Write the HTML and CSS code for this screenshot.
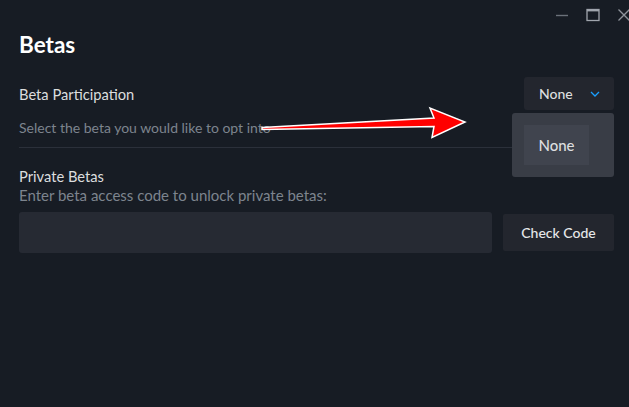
FILE: index.html
```html
<!DOCTYPE html>
<html lang="en">
<head>
<meta charset="utf-8">
<title>Betas</title>
<link rel="stylesheet" href="styles.css">
</head>
<body>
<div class="window">
  <div class="titlebar">
    <div class="ctrl"><svg width="14" height="14" viewBox="0 0 14 14"><path d="M1 7.5H13" stroke="#6b717a" stroke-width="1.4"/></svg></div>
    <div class="ctrl"><svg width="14" height="14" viewBox="0 0 14 14"><rect x="1" y="1.5" width="12" height="11" fill="none" stroke="#a0a5ad" stroke-width="1.3"/><path d="M1 2.6H13" stroke="#a0a5ad" stroke-width="1.6"/></svg></div>
    <div class="ctrl"><svg width="14" height="14" viewBox="0 0 14 14"><path d="M1.5 1.5L12.5 12.5M12.5 1.5L1.5 12.5" stroke="#8e939b" stroke-width="1.3"/></svg></div>
  </div>
  <div class="page">
    <h1 class="title">Betas</h1>
    <div class="row">
      <div class="label">Beta Participation</div>
      <button class="select">None<svg class="chev" width="10" height="6" viewBox="0 0 10 6"><path d="M1 1L5 5L9 1" fill="none" stroke="#1a9fff" stroke-width="1.3"/></svg></button>
    </div>
    <div class="desc first">Select the beta you would like to opt into</div>
    <div class="sep"></div>
    <div class="label private">Private Betas</div>
    <div class="desc second">Enter beta access code to unlock private betas:</div>
    <div class="coderow">
      <div class="input"></div>
      <button class="btn">Check Code</button>
    </div>
  </div>
  <div class="menu">
    <div class="item">None</div>
  </div>
  <svg class="arrow" width="629" height="407" viewBox="0 0 629 407">
    <path d="M262 127.6 L434 118 L430 108 L465 122 L432 137.5 L434 126.5 L262 129.6 Z" fill="#ff0000" stroke="#ffffff" stroke-width="1.5" stroke-linejoin="miter"/>
  </svg>
</div>
</body>
</html>
```
FILE: styles.css
```css
* { box-sizing: border-box; }
html, body {
  margin: 0;
  padding: 0;
  background: #171c24;
  overflow: hidden;
}
body {
  font-family: Lato, "Noto Sans", sans-serif;
  color: #dcdedf;
  width: 629px;
  height: 407px;
}
.window {
  position: relative;
  width: 629px;
  height: 407px;
  overflow: hidden;
}
.titlebar {
  height: 30px;
  display: flex;
  justify-content: flex-end;
  margin-right: -10px;
}
.ctrl {
  width: 31px;
  height: 30px;
  display: flex;
  align-items: center;
  justify-content: center;
  padding-bottom: 1px;
}
.page {
  padding: 0 15px 0 19px;
}
.title {
  margin: 0;
  font-size: 22.5px;
  font-weight: 700;
  line-height: 30px;
  color: #ffffff;
}
.row {
  margin-top: 17px;
  display: flex;
  justify-content: space-between;
  align-items: center;
}
.label {
  font-size: 14.7px;
  line-height: 18px;
  color: #dcdedf;
}
.select {
  width: 90px;
  height: 33px;
  border: none;
  border-radius: 3px;
  background: #23262e;
  color: #dcdedf;
  font-family: Lato, "Noto Sans", sans-serif;
  font-size: 14px;
  font-weight: 500;
  display: flex;
  align-items: center;
  padding: 0 0 0 15px;
}
.chev {
  margin-left: 17px;
  margin-top: 1px;
}
.desc {
  font-size: 14px;
  line-height: 20px;
  color: #7d848e;
}
.desc.first {
  margin-top: 8px;
}
.desc.second {
  font-size: 15px;
}
.sep {
  margin-top: 9px;
  height: 1px;
  background: #2b303a;
}
.private {
  margin-top: 19px;
}
.coderow {
  margin-top: 7px;
  display: flex;
  align-items: center;
  gap: 11px;
}
.input {
  flex: 1;
  height: 41px;
  border-radius: 3px;
  background: #262a33;
}
.btn {
  width: 111px;
  height: 37px;
  border: none;
  border-radius: 2px;
  background: #23262e;
  color: #e6e8ea;
  font-family: Lato, "Noto Sans", sans-serif;
  font-size: 14px;
  font-weight: 500;
}
.menu {
  position: absolute;
  left: 512px;
  top: 113px;
  width: 102px;
  height: 64px;
  background: #393d46;
  border-radius: 3px;
  padding: 12px;
}
.item {
  width: 65px;
  height: 40px;
  background: #40444e;
  display: flex;
  align-items: center;
  justify-content: center;
  font-size: 15px;
  font-weight: 500;
  color: #dcdedf;
}
.arrow {
  position: absolute;
  left: 0;
  top: 0;
  pointer-events: none;
}
```
